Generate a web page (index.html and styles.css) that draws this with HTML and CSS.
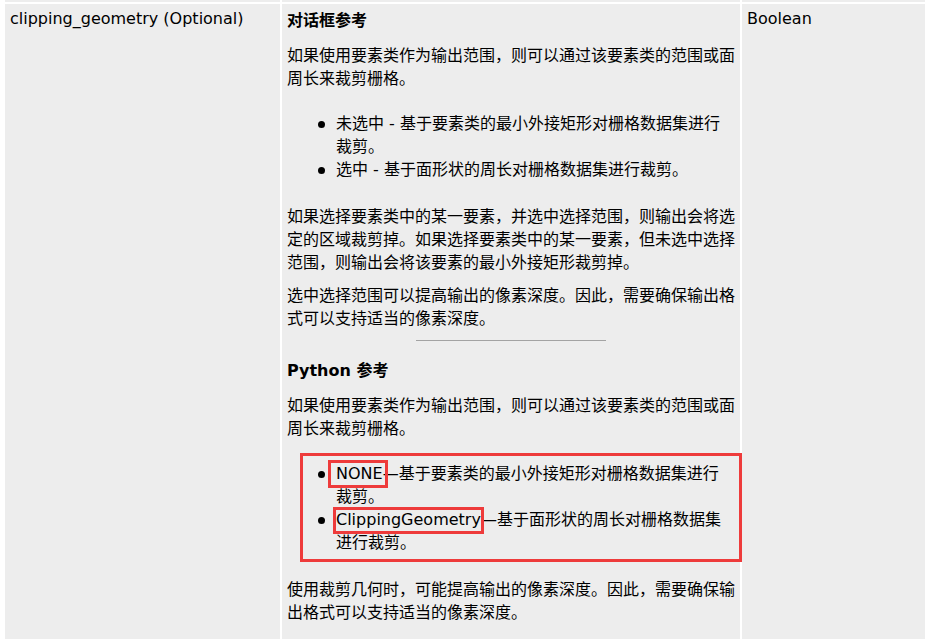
FILE: index.html
```html
<!DOCTYPE html>
<html lang="zh-CN">
<head>
   <meta charset="UTF-8">
   <meta name="viewport" content="width=device-width, initial-scale=1.0">
   <title>clipping_geometry</title>
   <link rel="stylesheet" href="styles.css">
</head>
<body>
   <table class="params">
      <colgroup>
         <col class="col-name">
         <col class="col-desc">
         <col class="col-type">
      </colgroup>
      <tr class="prev">
         <td></td>
         <td></td>
         <td></td>
      </tr>
      <tr>
         <td>clipping_geometry (Optional)</td>
         <td>
            <h4 class="sub">对话框参考</h4>
            <p>如果使用要素类作为输出范围，则可以通过该要素类的范围或面周长来裁剪栅格。</p>
            <ul class="opts">
               <li>未选中 - 基于要素类的最小外接矩形对栅格数据集进行裁剪。</li>
               <li>选中 - 基于面形状的周长对栅格数据集进行裁剪。</li>
            </ul>
            <p>如果选择要素类中的某一要素，并选中选择范围，则输出会将选定的区域裁剪掉。如果选择要素类中的某一要素，但未选中选择范围，则输出会将该要素的最小外接矩形裁剪掉。</p>
            <p>选中选择范围可以提高输出的像素深度。因此，需要确保输出格式可以支持适当的像素深度。</p>
            <hr class="rule">
            <h4 class="sub">Python 参考</h4>
            <p>如果使用要素类作为输出范围，则可以通过该要素类的范围或面周长来裁剪栅格。</p>
            <div class="boxed">
               <ul class="opts">
                  <li><span class="tag tag-none">NONE</span>—基于要素类的最小外接矩形对栅格数据集进行裁剪。</li>
                  <li><span class="tag tag-clip">ClippingGeometry</span>—基于面形状的周长对栅格数据集进行裁剪。</li>
               </ul>
            </div>
            <p>使用裁剪几何时，可能提高输出的像素深度。因此，需要确保输出格式可以支持适当的像素深度。</p>
         </td>
         <td>Boolean</td>
      </tr>
   </table>
</body>
</html>
```

FILE: styles.css
```css
body {
   margin: 0;
   background: #ffffff;
   font-family: "DejaVu Sans", "Noto Sans CJK SC", sans-serif;
   font-size: 16px;
   line-height: 23px;
   color: #000000;
}

.params {
   table-layout: fixed;
   width: 924px;
   margin: -2px 0 0 3px;
   border-collapse: separate;
   border-spacing: 2px;
}

.col-name {
   width: 275px;
}

.col-desc {
   width: 458px;
}

.col-type {
   width: 183px;
}

.params td {
   background: #ededed;
   vertical-align: top;
   padding: 3px 5px 24px;
}

.params .prev td {
   height: 2px;
   padding: 0;
   line-height: 0;
}

.sub {
   margin: 0 0 10px;
   font-size: 16px;
   line-height: 27px;
   font-weight: bold;
}

p {
   margin: 10px 0;
}

.opts {
   list-style: none;
   margin: 22px 0 24px;
   padding-left: 49px;
}

/* round bullet, kept in flow so the line height stays 23px */
.opts li::before {
   content: "";
   display: inline-block;
   width: 7px;
   height: 7px;
   border-radius: 50%;
   background: #000000;
   margin: 0 11px 0 -18px;
   vertical-align: middle;
}

.rule {
   width: 190px;
   height: 0;
   border: 0;
   border-top: 1px solid #a3a3a3;
   margin: 9px auto 16px;
}

.boxed {
   margin: 13px -7px 16px 13px;
   border: 3px solid #ee3b3b;
   padding: 6px 0 5px;
}

.boxed .opts {
   margin: 0;
   padding: 0 6px 0 33px;
}

.tag {
   position: relative;
}

.tag::after {
   content: "";
   position: absolute;
   border: 3px solid #ee3b3b;
}

.tag-none::after {
   top: -4px;
   bottom: -5px;
   left: -8px;
   right: -5px;
}

.tag-clip::after {
   top: -3px;
   bottom: -5px;
   left: -3px;
   right: -3px;
}
```
